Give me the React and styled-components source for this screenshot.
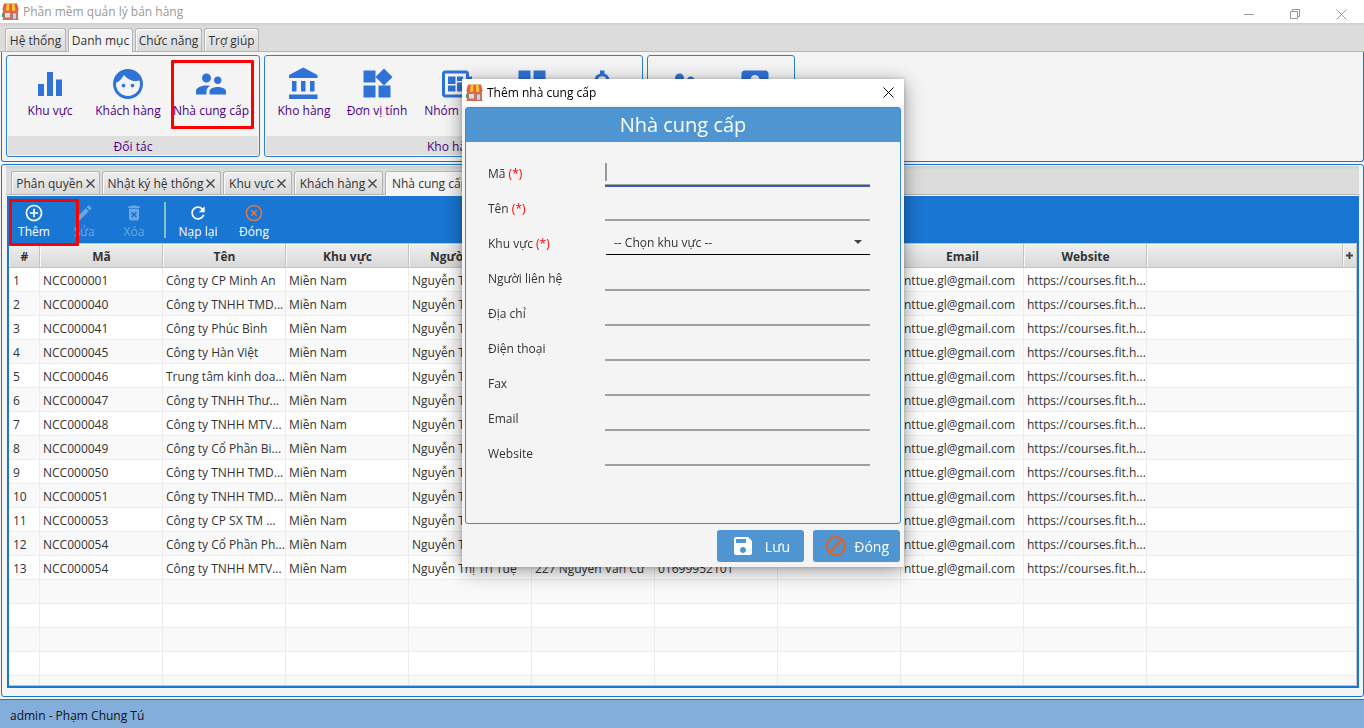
import React from "react";
import styled, { createGlobalStyle, css } from "styled-components";

const GlobalStyle = createGlobalStyle`
  *, *::before, *::after { box-sizing: border-box; }
  body { margin: 0; background: #f4f4f4; }
  body, button, input, select {
    font-family: "Open Sans", "Noto Sans", sans-serif;
    font-size: 12px;
    color: #333;
  }
  button { padding: 0; border: 0; background: none; }
`;

const BLUE = "#1976d2";

const Window = styled.div`
  display: flex;
  flex-direction: column;
  height: 100vh;
  overflow: hidden;
`;

const TitleBar = styled.header`
  display: flex;
  align-items: center;
  gap: 4px;
  height: 23px;
  flex: none;
  padding-left: 2px;
  background: #fff;
  color: #999;
`;

const WindowButtons = styled.div`
  display: flex;
  margin-left: auto;
`;

const WindowButton = styled.button`
  display: grid;
  place-items: center;
  width: 46px;
  height: 23px;
  padding-top: 5px;
`;

const TabStrip = styled.div`
  display: flex;
  align-items: flex-end;
  gap: 2px;
  height: 29px;
  flex: none;
  padding-left: 5px;
  background: linear-gradient(#cfcfcf, #dcdcdc 4px);
  border-bottom: 1px solid #b5b5b5;
`;

const TabBox = styled.div`
  display: flex;
  align-items: center;
  justify-content: center;
  gap: 3px;
  width: ${(p) => p.$width}px;
  height: ${(p) => (p.$active ? 24 : 23)}px;
  margin-bottom: ${(p) => (p.$active ? -1 : 0)}px;
  border: 1px solid #b5b5b5;
  border-bottom: 0;
  border-radius: 3px 3px 0 0;
  background: ${(p) => (p.$active ? "#f4f4f4" : "linear-gradient(#efefef, #d9d9d9)")};
  box-shadow: inset 1px 1px 0 #fafafa;
  white-space: nowrap;
`;

const TabClose = styled.button`
  display: grid;
  place-items: center;
  width: 9px;
  height: 9px;
`;

const Ribbon = styled.section`
  display: flex;
  gap: 4px;
  flex: none;
  padding: 3px 4px 4px;
  margin: 0 0 2px 1px;
  border: 1px solid ${BLUE};
  border-top: 0;
  border-radius: 0 0 3px 3px;
`;

const Group = styled.div`
  display: flex;
  flex-direction: column;
  height: 102px;
  border: 1px solid #2b80d3;
  border-radius: 3px;
`;

const GroupItems = styled.div`
  display: flex;
  flex: 1;
  padding: 10px ${(p) => p.$tail}px 0 ${(p) => p.$lead}px;
`;

const GroupTitle = styled.div`
  height: 19px;
  line-height: 21px;
  margin: 0 1px 1px;
  text-align: center;
  background: #dfdfdf;
  color: #4b0082;
`;

const highlight = css`
  position: relative;
  z-index: 1;
  &::after {
    content: "";
    position: absolute;
    inset: ${(p) => p.$highlight};
    border: 3px solid #f00;
    border-radius: 1px;
  }
`;

const RibbonButton = styled.button`
  display: flex;
  flex-direction: column;
  align-items: center;
  gap: 1px;
  width: ${(p) => p.$width}px;
  height: 64px;
  line-height: 16px;
  color: #4b0082;
  white-space: nowrap;
  ${(p) => p.$highlight && highlight}
  svg { width: 36px; height: 36px; fill: #2f72d8; }
`;

const Workspace = styled.main`
  display: flex;
  flex-direction: column;
  flex: 1;
  min-height: 0;
  margin-left: 1px;
  padding: 1px 4px 8px;
  border: 1px solid ${BLUE};
  border-radius: 3px;
`;

const Pane = styled.section`
  display: flex;
  flex-direction: column;
  flex: 1;
  min-height: 0;
  margin: 1px 0 0 1px;
  border: 2px solid ${BLUE};
  border-top: 0;
`;

const Toolbar = styled.div`
  display: flex;
  align-items: center;
  height: 47px;
  flex: none;
  background: ${BLUE};
`;

const ToolButton = styled.button`
  display: flex;
  flex-direction: column;
  align-items: center;
  gap: 1px;
  width: ${(p) => p.$width}px;
  height: 39px;
  padding-top: 3px;
  line-height: 16px;
  color: ${(p) => (p.disabled ? "#6ba6e1" : "#fff")};
  ${(p) => p.$highlight && highlight}
  svg { flex: none; width: 20px; height: 20px; fill: currentColor; }
`;

const Divider = styled.span`
  width: 2px;
  height: 36px;
  margin: 0 4px 0 5px;
  background: #7cc5c0;
`;

const TableArea = styled.div`
  flex: 1;
  min-height: 0;
  overflow: hidden;
  background: #fff;
  border: solid #c4c4c4;
  border-width: 0 1px 1px 0;
`;

const Table = styled.table`
  width: 100%;
  table-layout: fixed;
  border-collapse: separate;
  border-spacing: 0;
  th, td {
    height: 24px;
    padding: 2px 3px 0;
    white-space: nowrap;
    line-height: 18px;
  }
  td:first-child { padding-left: 4px; }
  th {
    height: 25px;
    padding-left: 4px;
    font-weight: 700;
    text-align: center;
    background: linear-gradient(#efefef, #d9d9d9);
    border: solid #c4c4c4;
    border-width: 1px 1px 1px 0;
    box-shadow: inset 1px 1px 0 #f8f8f8;
  }
  td { border: solid #ececec; border-width: 0 1px 1px 0; }
  td:nth-last-child(2), td:last-child, th:last-child { border-right: 0; }
  tbody tr:nth-child(even) { background: #f9f9f9; }
`;

const MenuHeader = styled.th`
  && { padding: 0; }
`;

const ColumnMenu = styled.button`
  display: block;
  margin: 0 auto;
  svg { display: block; }
`;

const StatusBar = styled.footer`
  flex: none;
  height: 29px;
  margin-top: 2px;
  padding: 0 10px;
  line-height: 31px;
  border-top: 1px solid ${BLUE};
  background: #83aedc;
  color: #111;
`;

const Overlay = styled.div`
  position: fixed;
  inset: 0;
  z-index: 5;
  display: flex;
  align-items: flex-start;
  justify-content: center;
  padding: 79px 0 0 2px;
`;

const Dialog = styled.div`
  width: 442px;
  max-width: 100%;
  background: #f4f4f4;
  box-shadow: 0 4px 18px rgba(0, 0, 0, 0.4), 0 0 4px rgba(0, 0, 0, 0.2);
`;

const DialogBar = styled.div`
  display: flex;
  align-items: center;
  gap: 4px;
  height: 26px;
  padding: 0 10px 0 4px;
  background: #fff;
  color: #000;
  button { margin-left: auto; }
  button svg { display: block; }
`;

const Panel = styled.div`
  margin: 2px 3px 6px;
  height: 417px;
  border: 1px solid #3a88d6;
  border-radius: 3px;
`;

const PanelTitle = styled.h1`
  margin: 0 0 13px;
  height: 34px;
  line-height: 34px;
  font-size: 20px;
  font-weight: 400;
  text-align: center;
  color: #fff;
  background: #4f95d2;
`;

const Field = styled.div`
  display: grid;
  grid-template-columns: 117px 1fr;
  align-items: center;
  height: 35px;
  padding: 0 30px 0 22px;
  label { padding-top: 1px; }
  em { font-style: normal; color: #f00; }
`;

const Input = styled.input`
  width: 100%;
  height: 26px;
  padding: 0 2px;
  border: 0;
  border-bottom: 2px solid #a0a0a0;
  outline: none;
  background: transparent;
`;

const FocusField = styled.div`
  display: flex;
  align-items: center;
  height: 28px;
  border-bottom: 2px solid #4059a9;
  &::before {
    content: "";
    width: 2px;
    height: 18px;
    background: #999;
  }
  input { flex: 1; height: 26px; border-bottom: 1px solid #a0a0a0; margin-left: -2px; caret-color: transparent; }
`;

const SelectBox = styled.div`
  display: flex;
  align-items: center;
  height: 24px;
  padding-right: 8px;
  margin-left: 1px;
  border-bottom: 1px solid #000;
  select {
    flex: 1;
    padding: 1px 8px 0;
    border: 0;
    outline: none;
    appearance: none;
    background: transparent;
  }
`;

const Actions = styled.div`
  display: flex;
  justify-content: flex-end;
  gap: 9px;
  padding: 0 4px 5px;
`;

const ActionButton = styled.button`
  display: flex;
  align-items: center;
  justify-content: space-between;
  width: 87px;
  height: 32px;
  padding: 0 ${(p) => p.$pad}px;
  border-radius: 3px;
  font-size: 14px;
  color: #fff;
  background: #4f95d2;
`;

const ICONS = {
  bars: "M10 20h4V4h-4v16zm-6 0h4v-8H4v8zM16 9v11h4V9h-4z",
  face: "M9 11.75c-.69 0-1.25.56-1.25 1.25s.56 1.25 1.25 1.25 1.25-.56 1.25-1.25-.56-1.25-1.25-1.25zm6 0c-.69 0-1.25.56-1.25 1.25s.56 1.25 1.25 1.25 1.25-.56 1.25-1.25-.56-1.25-1.25-1.25zM12 2C6.48 2 2 6.48 2 12s4.48 10 10 10 10-4.48 10-10S17.52 2 12 2zm0 18c-4.41 0-8-3.59-8-8 0-.29.02-.58.05-.86 2.36-1.05 4.23-2.98 5.21-5.37C11.07 8.33 14.05 10 17.42 10c.78 0 1.53-.09 2.25-.26.21.71.33 1.47.33 2.26 0 4.41-3.59 8-8 8z",
  people: "M16.5 12c1.38 0 2.49-1.12 2.49-2.5S17.88 7 16.5 7C15.12 7 14 8.12 14 9.5s1.12 2.5 2.5 2.5zM9 11c1.66 0 2.99-1.34 2.99-3S10.66 5 9 5C7.34 5 6 6.34 6 8s1.34 3 3 3zm7.5 3c-1.83 0-5.5.92-5.5 2.75V19h11v-2.25c0-1.83-3.67-2.75-5.5-2.75zM9 13c-2.33 0-7 1.17-7 3.5V19h7v-2.25c0-.85.33-2.34 2.37-3.47C10.5 13.1 9.66 13 9 13z",
  bank: "M4 10v7h3v-7H4zm6 0v7h3v-7h-3zM2 22h19v-3H2v3zm14-12v7h3v-7h-3zm-4.5-9L2 6v2h19V6l-9.5-5z",
  widgets: "M13 13v8h8v-8h-8zM3 21h8v-8H3v8zM3 3v8h8V3H3zm13.66-1.31L11 7.34 16.66 13l5.66-5.66-5.66-5.65z",
  board: "M22 9V7h-2V5c0-1.1-.9-2-2-2H4c-1.1 0-2 .9-2 2v14c0 1.1.9 2 2 2h14c1.1 0 2-.9 2-2v-2h2v-2h-2v-2h2v-2h-2V9h2zm-4 10H4V5h14v14zM6 13h5v4H6zm6-6h4v3h-4zM6 7h5v5H6zm6 4h4v6h-4z",
  dashboard: "M3 13h8V3H3v10zm0 8h8v-6H3v6zm10 0h8V11h-8v10zm0-18v6h8V3h-8z",
  money: "M11.8 10.9c-2.27-.59-3-1.2-3-2.15 0-1.09 1.01-1.85 2.7-1.85 1.78 0 2.44.85 2.5 2.1h2.21c-.07-1.72-1.12-3.3-3.21-3.81V3h-3v2.16c-1.94.42-3.5 1.68-3.5 3.61 0 2.31 1.91 3.46 4.7 4.13 2.5.6 3 1.48 3 2.41 0 .69-.49 1.79-2.7 1.79-2.06 0-2.87-.92-2.98-2.1h-2.2c.12 2.19 1.76 3.42 3.68 3.83V21h3v-2.15c1.95-.37 3.5-1.5 3.5-3.55 0-2.84-2.43-3.81-4.7-4.4z",
  account: "M3 5v14c0 1.1.89 2 2 2h14c1.1 0 2-.9 2-2V5c0-1.1-.9-2-2-2H5c-1.11 0-2 .9-2 2zm12 4c0 1.66-1.34 3-3 3s-3-1.34-3-3 1.34-3 3-3 3 1.34 3 3zm-9 8c0-2 4-3.1 6-3.1s6 1.1 6 3.1v1H6v-1z",
  add: "M13 7h-2v4H7v2h4v4h2v-4h4v-2h-4V7zm-1-5C6.48 2 2 6.48 2 12s4.48 10 10 10 10-4.48 10-10S17.52 2 12 2zm0 18c-4.41 0-8-3.59-8-8s3.59-8 8-8 8 3.59 8 8-3.59 8-8 8z",
  edit: "M3 17.25V21h3.75L17.81 9.94l-3.75-3.75L3 17.25zM20.71 7.04c.39-.39.39-1.02 0-1.41l-2.34-2.34c-.39-.39-1.02-.39-1.41 0l-1.83 1.83 3.75 3.75 1.83-1.83z",
  trash: "M6 19c0 1.1.9 2 2 2h8c1.1 0 2-.9 2-2V7H6v12zm2.46-7.12l1.41-1.41L12 12.59l2.12-2.12 1.41 1.41L13.41 14l2.12 2.12-1.41 1.41L12 15.41l-2.12 2.12-1.41-1.41L10.59 14l-2.13-2.12zM15.5 4l-1-1h-5l-1 1H5v2h14V4z",
  refresh: "M17.65 6.35C16.2 4.9 14.21 4 12 4c-4.42 0-7.99 3.58-7.99 8s3.57 8 7.99 8c3.73 0 6.84-2.55 7.73-6h-2.08c-.82 2.33-3.04 4-5.65 4-3.31 0-6-2.69-6-6s2.69-6 6-6c1.66 0 3.14.69 4.22 1.78L13 11h7V4l-2.35 2.35z",
  cancel: "M14.59 8L12 10.59 9.41 8 8 9.41 10.59 12 8 14.59 9.41 16 12 13.41 14.59 16 16 14.59 13.41 12 16 9.41 14.59 8zM12 2C6.47 2 2 6.47 2 12s4.47 10 10 10 10-4.47 10-10S17.53 2 12 2zm0 18c-4.41 0-8-3.59-8-8s3.59-8 8-8 8 3.59 8 8-3.59 8-8 8z",
  save: "M17 3H5c-1.11 0-2 .9-2 2v14c0 1.1.89 2 2 2h14c1.1 0 2-.9 2-2V7l-4-4zm-5 16c-1.66 0-3-1.34-3-3s1.34-3 3-3 3 1.34 3 3-1.34 3-3 3zm3-10H5V5h10v4z",
  block: "M12 2C6.48 2 2 6.48 2 12s4.48 10 10 10 10-4.48 10-10S17.52 2 12 2zM4 12c0-4.42 3.58-8 8-8 1.85 0 3.55.63 4.9 1.69L5.69 16.9C4.63 15.55 4 13.85 4 12zm8 8c-1.85 0-3.55-.63-4.9-1.69L18.31 7.1C19.37 8.45 20 10.15 20 12c0 4.42-3.58 8-8 8z",
};

const Icon = ({ name, size = 24, color = "currentColor", ...rest }) => (
  <svg width={size} height={size} viewBox="0 0 24 24" fill={color} aria-hidden="true" {...rest}>
    <path d={ICONS[name]} />
  </svg>
);

const CancelIcon = styled(Icon)`
  && { fill: #d9764a; }
`;

const Cross = ({ size = 11, color = "#999", width = 1 }) => (
  <svg width={size} height={size} viewBox={`0 0 ${size} ${size}`} stroke={color} strokeWidth={width} aria-hidden="true">
    <path d={`M.5 .5 L${size - 0.5} ${size - 0.5} M${size - 0.5} .5 L.5 ${size - 0.5}`} />
  </svg>
);

const ShopIcon = () => (
  <svg width="17" height="17" viewBox="0 0 17 17" aria-hidden="true">
    <rect x="1" y="7" width="15" height="9.5" fill="#e06a50" />
    <path d="M2 .5h13l1.5 5.5v1.3q-1.6 1.5-3.2 0-1.6 1.5-3.2 0-1.6 1.5-3.2 0-1.6 1.5-3.2 0-1.6 1.5-3.2 0V6z" fill="#e0604a" />
    <path d="M4.7.5h2.6v6.8q-1.6 1.5-3.2 0V6zM9.8.5h2.6l.9 5.5v1.3q-1.6 1.5-3.2 0z" fill="#f7c62f" />
    <rect x="3" y="10" width="5" height="4.5" fill="#c9e3f5" />
    <rect x="10.5" y="10" width="4" height="6.5" fill="#b6d8f0" stroke="#c25a48" strokeWidth=".6" />
    <path d="M0 10.5q1.5-2.5 2.3 0V14H0z" fill="#35a56a" />
    <rect x=".5" y="15.8" width="16" height="1.2" fill="#c9705f" />
  </svg>
);

const MENU = [
  ["Hệ thống", 61],
  ["Danh mục", 65],
  ["Chức năng", 67],
  ["Trợ giúp", 55],
];

const GROUPS = [
  {
    title: "Đối tác",
    lead: 7,
    tail: 7,
    items: [
      ["bars", "Khu vực", 72],
      ["face", "Khách hàng", 84],
      ["people", "Nhà cung cấp", 82, "-6px -2px 1px 1px"],
    ],
  },
  {
    title: "Kho hàng",
    lead: 3,
    tail: 0,
    items: [
      ["bank", "Kho hàng", 72],
      ["widgets", "Đơn vị tính", 74],
      ["board", "Nhóm hàng", 86],
      ["dashboard", "Hàng hóa", 64],
      ["money", "Tỷ giá", 78],
    ],
  },
  {
    title: "Nhân sự",
    lead: 0,
    tail: 4,
    items: [
      ["people", "Bộ phận", 72],
      ["account", "Nhân viên", 70],
    ],
  },
];

const TABS = [
  ["Phân quyền", 89],
  ["Nhật ký hệ thống", 119],
  ["Khu vực", 69],
  ["Khách hàng", 89],
  ["Nhà cung cấp", 102],
];

const SUPPLIERS = [
  ["NCC000001", "Công ty CP Minh An"],
  ["NCC000040", "Công ty TNHH TMD..."],
  ["NCC000041", "Công ty Phúc Bình"],
  ["NCC000045", "Công ty Hàn Việt"],
  ["NCC000046", "Trung tâm kinh doa..."],
  ["NCC000047", "Công ty TNHH Thư..."],
  ["NCC000048", "Công ty TNHH MTV..."],
  ["NCC000049", "Công ty Cổ Phần Bi..."],
  ["NCC000050", "Công ty TNHH TMD..."],
  ["NCC000051", "Công ty TNHH TMD..."],
  ["NCC000053", "Công ty CP SX TM ..."],
  ["NCC000054", "Công ty Cổ Phần Ph..."],
  ["NCC000054", "Công ty TNHH MTV..."],
];

const COLUMNS = ["Mã", "Tên", "Khu vực", "Người liên hệ", "Địa chỉ", "Điện thoại", "Fax", "Email", "Website"];

const FIELDS = [
  ["ten", "Tên", true],
  ["khuvuc", "Khu vực", true],
  ["nguoi", "Người liên hệ"],
  ["diachi", "Địa chỉ"],
  ["dienthoai", "Điện thoại"],
  ["fax", "Fax"],
  ["email", "Email"],
  ["website", "Website"],
];

const FieldLabel = ({ id, text, required }) => (
  <label htmlFor={id}>
    {text} {required && <em>(*)</em>}
  </label>
);

function SupplierTable() {
  return (
    <Table>
      <colgroup>
        <col style={{ width: 31 }} />
        {COLUMNS.map((c) => <col key={c} style={{ width: 123 }} />)}
        <col />
        <col style={{ width: 13 }} />
      </colgroup>
      <thead>
        <tr>
          <th>#</th>
          {COLUMNS.map((c) => <th key={c}>{c}</th>)}
          <th />
          <MenuHeader>
            <ColumnMenu aria-label="Cột">
              <svg width="7" height="7" viewBox="0 0 7 7"><path d="M2.5 0h2v2.5H7v2H4.5V7h-2V4.5H0v-2h2.5z" fill="#444" /></svg>
            </ColumnMenu>
          </MenuHeader>
        </tr>
      </thead>
      <tbody>
        {SUPPLIERS.map(([code, name], i) => (
          <tr key={i}>
            <td>{i + 1}</td>
            <td>{code}</td>
            <td>{name}</td>
            <td>Miền Nam</td>
            <td>Nguyễn Thị Trí Tuệ</td>
            <td>227 Nguyễn Văn Cừ</td>
            <td>01699952101</td>
            <td />
            <td>nttue.gl@gmail.com</td>
            <td>https://courses.fit.h...</td>
            <td />
            <td />
          </tr>
        ))}
        {Array.from({ length: 5 }, (_, i) => (
          <tr key={`empty-${i}`}>
            {Array.from({ length: 12 }, (_, c) => <td key={c} />)}
          </tr>
        ))}
      </tbody>
    </Table>
  );
}

function SupplierDialog() {
  return (
    <Overlay>
      <Dialog role="dialog" aria-label="Thêm nhà cung cấp">
        <DialogBar>
          <ShopIcon />
          Thêm nhà cung cấp
          <button aria-label="Thoát"><Cross size={11} color="#000" /></button>
        </DialogBar>
        <Panel>
          <PanelTitle>Nhà cung cấp</PanelTitle>
          <Field>
            <FieldLabel id="ma" text="Mã" required />
            <FocusField><Input id="ma" /></FocusField>
          </Field>
          {FIELDS.map(([id, text, required]) => (
            <Field key={id}>
              <FieldLabel id={id} text={text} required={required} />
              {id === "khuvuc" ? (
                <SelectBox>
                  <select id={id}><option>-- Chọn khu vực --</option></select>
                  <svg width="8" height="4" viewBox="0 0 8 4" aria-hidden="true"><path d="M0 0h8L4 4z" fill="#444" /></svg>
                </SelectBox>
              ) : (
                <Input id={id} />
              )}
            </Field>
          ))}
        </Panel>
        <Actions>
          <ActionButton $pad={14}><Icon name="save" size={24} />Lưu</ActionButton>
          <ActionButton $pad={11}><Icon name="block" size={24} color="#e8601c" />Đóng</ActionButton>
        </Actions>
      </Dialog>
    </Overlay>
  );
}

export default function App() {
  return (
    <Window>
      <GlobalStyle />
      <TitleBar>
        <ShopIcon />
        Phần mềm quản lý bán hàng
        <WindowButtons>
          <WindowButton aria-label="Thu nhỏ">
            <svg width="10" height="11" stroke="#999"><path d="M0 5.5h10" /></svg>
          </WindowButton>
          <WindowButton aria-label="Khôi phục">
            <svg width="10" height="10" stroke="#999" fill="none"><path d="M.5 2.5h7v7h-7zM2.5 2.5v-2h7v7h-2" /></svg>
          </WindowButton>
          <WindowButton aria-label="Thoát"><Cross size={11} /></WindowButton>
        </WindowButtons>
      </TitleBar>
      <TabStrip>
        {MENU.map(([name, width], i) => (
          <TabBox as="button" key={name} $width={width} $active={i === 1}>{name}</TabBox>
        ))}
      </TabStrip>
      <Ribbon>
        {GROUPS.map((g) => (
          <Group key={g.title}>
            <GroupItems $lead={g.lead} $tail={g.tail}>
              {g.items.map(([icon, label, width, box]) => (
                <RibbonButton key={label} $width={width} $highlight={box}>
                  <Icon name={icon} />
                  {label}
                </RibbonButton>
              ))}
            </GroupItems>
            <GroupTitle>{g.title}</GroupTitle>
          </Group>
        ))}
      </Ribbon>
      <Workspace>
        <TabStrip>
          {TABS.map(([name, width], i) => (
            <TabBox key={name} $width={width} $active={i === 4}>
              <button>{name}</button>
              <TabClose aria-label="Đóng thẻ"><Cross size={9} color="#444" width={1.4} /></TabClose>
            </TabBox>
          ))}
        </TabStrip>
        <Pane>
          <Toolbar>
            <ToolButton $width={50} $highlight="-1px -20px -7px 0"><Icon name="add" />Thêm</ToolButton>
            <ToolButton $width={50} disabled><Icon name="edit" />Sửa</ToolButton>
            <ToolButton $width={50} disabled><Icon name="trash" />Xóa</ToolButton>
            <Divider />
            <ToolButton $width={56}><Icon name="refresh" />Nạp lại</ToolButton>
            <ToolButton $width={56}><CancelIcon name="cancel" />Đóng</ToolButton>
          </Toolbar>
          <TableArea><SupplierTable /></TableArea>
        </Pane>
      </Workspace>
      <StatusBar>admin - Phạm Chung Tú</StatusBar>
      <SupplierDialog />
    </Window>
  );
}
